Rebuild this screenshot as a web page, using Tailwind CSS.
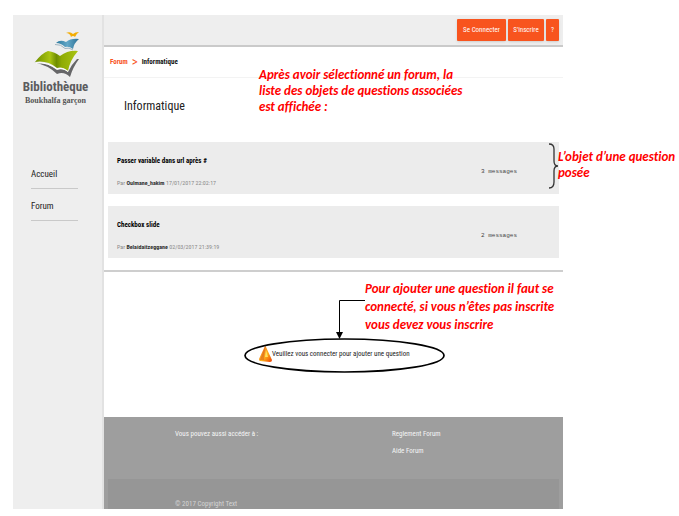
<!DOCTYPE html>
<html lang="fr">
<head>
<meta charset="utf-8">
<meta name="viewport" content="width=device-width, initial-scale=1">
<title>Forum - Informatique</title>
<script src="https://cdn.jsdelivr.net/npm/@tailwindcss/browser@4"></script>
</head>
<body class="bg-white font-['Roboto_Condensed','Liberation_Sans_Narrow',Roboto,sans-serif] text-[#222]">
<div class="relative pt-[15px] pl-[13px] pr-[116px]">
  <div class="flex">
    <aside class="w-[91px] shrink-0 border-r-2 border-[#e2e2e2] bg-[#eeeeee]">
      <a href="#" aria-label="Bibliothèque Boukhalfa garçon" class="mt-[15px] flex flex-col items-center pr-1">
        <svg class="h-12 w-12" viewBox="0 0 48 48" aria-hidden="true">
          <defs>
            <linearGradient id="leaf" x1="0" x2="1"><stop offset="0" stop-color="#6f8f00"/><stop offset=".35" stop-color="#aac511"/><stop offset=".5" stop-color="#6f8d00"/><stop offset=".62" stop-color="#8fab03"/><stop offset="1" stop-color="#a9c414"/></linearGradient>
            <linearGradient id="blue" x1="0" x2="1"><stop offset="0" stop-color="#2b789d"/><stop offset=".5" stop-color="#62a7c7"/><stop offset="1" stop-color="#2c7197"/></linearGradient>
          </defs>
          <path d="M1 32 L5 33 Q15 32 25 40 Q31 38 36 42 Q39 35 45 29 L47 29 Q41 37 38 47 Q32 41 25 44 Q16 35 1 32Z" fill="#666668"/>
          <path d="M3 32 Q10 23 16 21 Q23 22 28 26 Q36 20 46 21 Q38 30 36 41 Q30 36 25 38 Q15 30 3 32Z" fill="url(#leaf)"/>
          <path d="M4 33 Q16 32 25 39 Q31 37 36 41.500" fill="none" stroke="#fff" stroke-width="1"/>
          <path d="M24 13 Q28 9 34 12 Q39 8 47 9 Q42 13 41 19 Q37 16 33 17 Q29 13 24 13Z" fill="url(#blue)"/>
          <path d="M23 14.500 Q29 14 33 18.500 Q37 17 41 20" fill="none" stroke="#9fb4c0"/>
          <path d="M34 3 Q38 1 41 4 Q43 2 47 2 Q44 4 43 7 Q41 5 39 7 Q38 3 34 3Z" fill="#f3ad05"/>
        </svg>
        <span class="text-[13px] leading-[18px] font-bold text-[#5c5c5e]">Bibliothèque</span>
        <span class="font-['Liberation_Serif',serif] text-[8px] leading-[9px] font-bold text-[#555]">Boukhalfa garçon</span>
      </a>
      <nav class="mt-[52px] ml-[18px] mr-[24px] flex flex-col text-[9px] leading-4">
        <a href="#" class="border-b border-[#c9c9c9] pt-[9px] pb-[6px]">Accueil</a>
        <a href="#" class="border-b border-[#c9c9c9] pt-[9px] pb-[6px]">Forum</a>
      </nav>
    </aside>

    <div class="min-w-0 flex-1">
      <header class="flex h-8 items-center justify-end gap-[2px] border-b-2 border-[#cacaca] bg-[#eeeeee] pr-1 text-[7px] text-white">
        <button class="h-[22px] w-[49px] rounded-[1px] bg-[#f8541e] shadow">Se Connecter</button>
        <button class="h-[22px] w-[36px] rounded-[1px] bg-[#f8541e] shadow">S'inscrire</button>
        <button class="h-[22px] w-[13px] rounded-[1px] bg-[#f8541e] shadow">?</button>
      </header>
      <nav class="flex h-[31px] items-center gap-1 border-b border-[#f3f3f3] pl-[6px] text-[7px] text-[#f8541e]" aria-label="Fil d'Ariane">
        <a href="#" class="font-bold">Forum</a><span class="text-[13px]">&gt;</span><span class="font-bold text-[#111]">Informatique</span>
      </nav>
      <main>
        <h1 class="pt-[18px] pb-[26px] pl-5 text-[12px] leading-5">Informatique</h1>
        <section class="flex flex-col gap-3 border-b-2 border-[#cecece] px-1 pb-3">
          <article class="flex h-[52px] items-center justify-between bg-[#ececec] pr-[42px] pl-[9px]">
            <div class="pt-[7px]">
              <h2 class="text-[7px] leading-[13px] font-bold text-black">Passer variable dans url après #</h2>
              <p class="mt-[8px] text-[6px] leading-[13px] text-[#888]">Par <b class="text-[#333]">Oulmane_hakim</b> 17/01/2017 22:02:17</p>
            </div>
            <span class="mt-[6px] font-['Liberation_Mono',monospace] text-[6px] text-[#444]">3 messages</span>
          </article>
          <article class="flex h-[52px] items-center justify-between bg-[#ececec] pr-[42px] pl-[9px]">
            <div class="pt-[7px]">
              <h2 class="text-[7px] leading-[13px] font-bold text-black">Checkbox slide</h2>
              <p class="mt-[8px] text-[6px] leading-[13px] text-[#888]">Par <b class="text-[#333]">Belaidaitzeggane</b> 02/03/2017 21:39:19</p>
            </div>
            <span class="mt-[6px] font-['Liberation_Mono',monospace] text-[6px] text-[#444]">2 messages</span>
          </article>
        </section>
        <p class="mt-[73px] flex items-center pl-[155px] text-[7px] text-[#222]">
          <svg class="h-[18px] w-[13px]" viewBox="0 0 13 18" aria-hidden="true">
            <defs><linearGradient id="warn" x1="0" x2="1" y1="0" y2="1"><stop offset="0" stop-color="#e8602c"/><stop offset=".55" stop-color="#ffb51c"/><stop offset="1" stop-color="#ec3900"/></linearGradient></defs>
            <path d="M6 1 Q7 1 7 2 L13 15 Q13 17 11 17 L1 16 Q0 16 0 14Z" fill="url(#warn)"/>
            <path d="M6 2 L1 15 L5 15Z" fill="#c8401a" opacity=".4"/>
            <path d="M7 5 L9 12 L6 12Z" fill="#ffe15b"/>
          </svg>
          Veuillez vous connecter pour ajouter une question
        </p>
      </main>
      <footer class="mt-[54px] bg-[#9e9e9e] px-1 text-[7px] text-[#f5f5f5]">
        <div class="flex h-[62px] pt-[9px] pl-[67px] leading-[17px]">
          <p class="w-[217px]">Vous pouvez aussi accéder à :</p>
          <div class="flex flex-col"><a href="#">Reglement Forum</a><a href="#">Aide Forum</a></div>
        </div>
        <p class="bg-[#969696] pt-[20px] pl-[67px] leading-[10px] text-[#d4d4d4]">© 2017 Copyright Text</p>
      </footer>
    </div>
  </div>

  <div class="pointer-events-none absolute inset-0 font-[Carlito,Lato,sans-serif] text-[13px] font-bold text-[#f00] italic [font-variant-ligatures:none]">
    <p class="absolute top-[67px] left-[259px] leading-4">Après avoir sélectionné un forum, la<br>liste des objets de questions associées<br>est affichée :</p>
    <p class="absolute top-[149px] left-[558px] leading-4 whitespace-nowrap">L’objet d’une question<br>posée</p>
    <p class="absolute top-[280px] left-[365px] leading-[18px]">Pour ajouter une question il faut se<br>connecté, si vous n’êtes pas inscrite<br>vous devez vous inscrire</p>
    <svg class="absolute top-[142px] left-[548px] h-[48px] w-[12px]" viewBox="0 0 12 48" fill="none" stroke="#333" stroke-width="1.3" aria-hidden="true"><path d="M1 2 Q6 2 6 7 V19 Q6 24 10 24 Q6 24 6 29 V40 Q6 46 1 46"/></svg>
    <svg class="absolute top-[296px] left-[242px] h-[80px] w-[206px]" viewBox="0 0 206 80" fill="none" stroke="#000" aria-hidden="true"><path d="M123 4.500H97.500V38"/><path d="M94 36H101L97.500 43Z" fill="#000" stroke="none"/><ellipse cx="102.500" cy="59.500" rx="99.500" ry="16.500" stroke-width="1.700"/></svg>
  </div>
</div>
</body>
</html>
